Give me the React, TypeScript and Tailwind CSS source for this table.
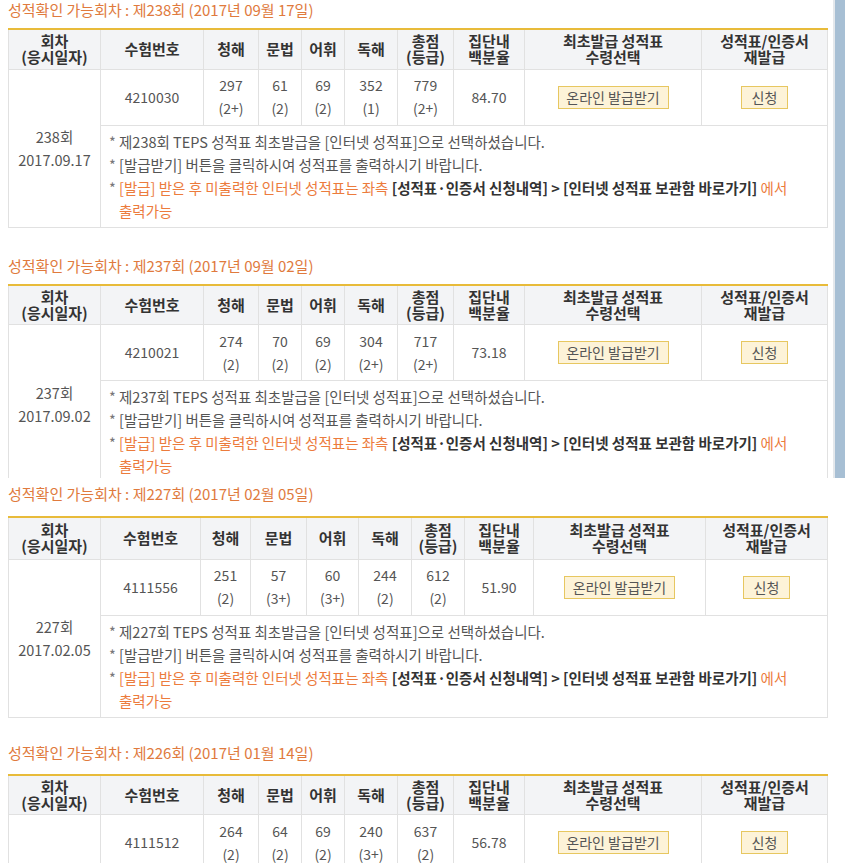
import React from 'react';

type Score = { v: string; g: string };

type Round = {
  round: string;
  examDate: string;
  shortDate: string;
  examNo: string;
  scores: Score[];
  pct: string;
  cols: number[];
};

const rounds: Round[] = [
  {
    round: '238',
    examDate: '2017년 09월 17일',
    shortDate: '2017.09.17',
    examNo: '4210030',
    scores: [
      { v: '297', g: '(2+)' },
      { v: '61', g: '(2)' },
      { v: '69', g: '(2)' },
      { v: '352', g: '(1)' },
      { v: '779', g: '(2+)' },
    ],
    pct: '84.70',
    cols: [92, 103, 55, 43, 43, 53, 56, 71, 177, 126],
  },
  {
    round: '237',
    examDate: '2017년 09월 02일',
    shortDate: '2017.09.02',
    examNo: '4210021',
    scores: [
      { v: '274', g: '(2)' },
      { v: '70', g: '(2)' },
      { v: '69', g: '(2)' },
      { v: '304', g: '(2+)' },
      { v: '717', g: '(2+)' },
    ],
    pct: '73.18',
    cols: [92, 103, 55, 43, 43, 53, 56, 71, 177, 126],
  },
  {
    round: '227',
    examDate: '2017년 02월 05일',
    shortDate: '2017.02.05',
    examNo: '4111556',
    scores: [
      { v: '251', g: '(2)' },
      { v: '57', g: '(3+)' },
      { v: '60', g: '(3+)' },
      { v: '244', g: '(2)' },
      { v: '612', g: '(2)' },
    ],
    pct: '51.90',
    cols: [92, 100, 50, 56, 52, 53, 53, 69, 172, 122],
  },
  {
    round: '226',
    examDate: '2017년 01월 14일',
    shortDate: '2017.01.14',
    examNo: '4111512',
    scores: [
      { v: '264', g: '(2)' },
      { v: '64', g: '(2)' },
      { v: '69', g: '(2)' },
      { v: '240', g: '(3+)' },
      { v: '637', g: '(2)' },
    ],
    pct: '56.78',
    cols: [92, 103, 55, 43, 43, 53, 56, 71, 177, 126],
  },
];

const headers: [string, string?][] = [
  ['회차', '(응시일자)'],
  ['수험번호'],
  ['청해'],
  ['문법'],
  ['어휘'],
  ['독해'],
  ['총점', '(등급)'],
  ['집단내', '백분율'],
  ['최초발급 성적표', '수령선택'],
  ['성적표/인증서', '재발급'],
];

function Section({
  r,
  className,
  tableClass = 'mt-2',
  headClass = 'h-[40px]',
}: {
  r: Round;
  className?: string;
  tableClass?: string;
  headClass?: string;
}) {
  return (
    <section className={className}>
      <h3 className="h-5 text-[15px] font-normal leading-5 text-[#e07a3d]">
        성적확인 가능회차 : 제{r.round}회 ({r.examDate})
      </h3>
      <table
        className={`${tableClass} w-[819px] table-fixed border-collapse border-t-2 border-t-[#e8bb3a] text-[14px] text-[#555]`}
      >
        <colgroup>
          {r.cols.map((w, i) => (
            <col key={i} style={{ width: w }} />
          ))}
        </colgroup>
        <thead>
          <tr className={`${headClass} bg-[#f3f4f6]`}>
            {headers.map(([a, b], i) => (
              <th
                key={i}
                className="border border-t-0 border-[#e1e1e1] p-0 text-center text-[15px] font-bold leading-[16px] text-[#333]"
              >
                {a}
                {b && <br />}
                {b}
              </th>
            ))}
          </tr>
        </thead>
        <tbody>
          <tr className="h-[56px]">
            <td rowSpan={2} className="border border-[#e1e1e1] text-center text-[14.5px] leading-[23px]">
              {r.round}회
              <br />
              {r.shortDate}
            </td>
            <td className="border border-[#e1e1e1] text-center">{r.examNo}</td>
            {r.scores.map((s, i) => (
              <td key={i} className="border border-[#e1e1e1] text-center leading-[23px]">
                {s.v}
                <br />
                {s.g}
              </td>
            ))}
            <td className="border border-[#e1e1e1] text-center">{r.pct}</td>
            <td className="border border-[#e1e1e1] text-center">
              <button className="h-[23px] w-[111px] border border-[#e7c760] bg-[#fdf3d8] text-[14px] leading-[21px] text-[#555]">
                온라인 발급받기
              </button>
            </td>
            <td className="border border-[#e1e1e1] text-center">
              <button className="h-[23px] w-[47px] border border-[#e7c760] bg-[#fdf3d8] text-[14px] leading-[21px] text-[#555]">
                신청
              </button>
            </td>
          </tr>
          <tr>
            <td colSpan={9} className="border border-[#e1e1e1] px-2 pt-[4px] pb-[5px] text-[14.5px] leading-[23px]">
              <p className="flex">
                <span className="w-[10px] shrink-0 text-[#777]">*</span>
                <span>제{r.round}회 TEPS 성적표 최초발급을 [인터넷 성적표]으로 선택하셨습니다.</span>
              </p>
              <p className="flex">
                <span className="w-[10px] shrink-0 text-[#777]">*</span>
                <span>[발급받기] 버튼을 클릭하시여 성적표를 출력하시기 바랍니다.</span>
              </p>
              <p className="flex">
                <span className="w-[10px] shrink-0 text-[#777]">*</span>
                <span className="text-[#ec7b3c]">
                  [발급] 받은 후 미출력한 인터넷 성적표는 좌측{' '}
                  <b className="text-[#333]">[성적표·인증서 신청내역] &gt; [인터넷 성적표 보관함 바로가기]</b>{' '}
                  에서
                  <br />
                  출력가능
                </span>
              </p>
            </td>
          </tr>
        </tbody>
      </table>
    </section>
  );
}

export default function App() {
  return (
    <main
      className="min-h-screen overflow-hidden bg-white"
      style={{ fontFamily: '"Noto Sans CJK KR", "Noto Sans", sans-serif' }}
    >
      <div className="flex h-[478px] overflow-hidden">
        <div className="w-[833px] pl-2">
          <Section r={rounds[0]} />
          <Section r={rounds[1]} className="mt-[28px]" />
        </div>
        <div className="w-[12px] border-l-2 border-l-[#e4e8ec] bg-[#a7bfd4]" />
      </div>
      <div className="pl-2">
        <Section r={rounds[2]} className="mt-[6px]" tableClass="mt-3" headClass="h-[42px]" />
        <Section r={rounds[3]} className="mt-[25px]" tableClass="mt-[11px]" />
      </div>
    </main>
  );
}
